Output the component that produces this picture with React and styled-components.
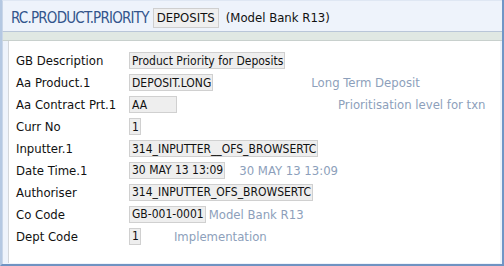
import React from 'react';
import styled, { createGlobalStyle } from 'styled-components';

const GlobalStyle = createGlobalStyle`
  html, body { margin: 0; padding: 0; background: #ffffff; }
  * { box-sizing: border-box; }
`;

const Frame = styled.div`
  width: 504px;
  height: 266px;
  display: flex;
  flex-direction: column;
  background: #eef3fb;
  border-left: 2px solid #b4c8e2;
  border-right: 2px solid #7096c6;
  border-bottom: 2px solid #6f93c2;
  font-family: "DejaVu Sans Condensed", "DejaVu Sans", sans-serif;
`;

const Header = styled.div`
  height: 31px;
  display: flex;
  align-items: center;
  gap: 4px;
  padding: 3px 0 0 8px;
  border-left: 1px solid #c9d6e8;
  border-top: 1px solid #dfe7f3;
  background: #eef3fb;
`;

const Title = styled.span`
  font-size: 15px;
  color: #33558c;
  letter-spacing: -0.8px;
`;

const KeyBox = styled.span`
  font-size: 13px;
  color: #111;
  background: #efefef;
  border: 1px solid #cfcfcf;
  padding: 1px 3px;
  height: 20px;
  display: flex;
  align-items: center;
`;

const Subtitle = styled.span`
  font-size: 13px;
  color: #111;
  margin-left: 3px;
`;

const Strip = styled.div`
  height: 10px;
  background: #e0e8e3;
  border-top: 1px solid #b9c6d8;
  border-bottom: 1px solid #c8d0cd;
  border-left: 1px solid #c9d6e8;
`;

const Body = styled.div`
  flex: 1;
  display: flex;
  padding: 0 2px 1px 5px;
  border-left: 1px solid #c9d6e8;
`;

const Panel = styled.div`
  flex: 1;
  background: #ffffff;
  border-left: 1px solid #d3d6da;
  padding: 9px 0 0 7px;
  display: flex;
  flex-direction: column;
`;

const Row = styled.div`
  height: 21.9px;
  display: flex;
  align-items: center;
`;

const Label = styled.span`
  width: 113px;
  font-size: 13px;
  color: #111;
`;

const Value = styled.span`
  height: 17px;
  min-width: ${p => p.$min || 0}px;
  display: flex;
  align-items: center;
  padding: 0 1px 0 2px;
  font-size: 12px;
  color: #111;
  background: #eeeeee;
  border: 1px solid #d0d0d0;
  white-space: nowrap;
`;

const Enrichment = styled.span`
  margin-left: ${p => p.$gap}px;
  font-size: 13px;
  color: #8d9fbb;
  white-space: nowrap;
`;

const rows = [
  { label: 'GB Description', value: 'Product Priority for Deposits' },
  { label: 'Aa Product.1', value: 'DEPOSIT.LONG', note: 'Long Term Deposit', gap: 98 },
  { label: 'Aa Contract Prt.1', value: 'AA', min: 48, note: 'Prioritisation level for txn', gap: 161 },
  { label: 'Curr No', value: '1' },
  { label: 'Inputter.1', value: '314_INPUTTER__OFS_BROWSERTC' },
  { label: 'Date Time.1', value: '30 MAY 13 13:09', note: '30 MAY 13 13:09', gap: 14 },
  { label: 'Authoriser', value: '314_INPUTTER_OFS_BROWSERTC' },
  { label: 'Co Code', value: 'GB-001-0001', note: 'Model Bank R13', gap: 3 },
  { label: 'Dept Code', value: '1', note: 'Implementation', gap: 33 },
];

export default function App() {
  return (
    <>
      <GlobalStyle />
      <Frame>
        <Header>
          <Title>RC.PRODUCT.PRIORITY</Title>
          <KeyBox>DEPOSITS</KeyBox>
          <Subtitle>(Model Bank R13)</Subtitle>
        </Header>
        <Strip />
        <Body>
          <Panel>
            {rows.map(r => (
              <Row key={r.label}>
                <Label>{r.label}</Label>
                <Value $min={r.min}>{r.value}</Value>
                {r.note && <Enrichment $gap={r.gap}>{r.note}</Enrichment>}
              </Row>
            ))}
          </Panel>
        </Body>
      </Frame>
    </>
  );
}
